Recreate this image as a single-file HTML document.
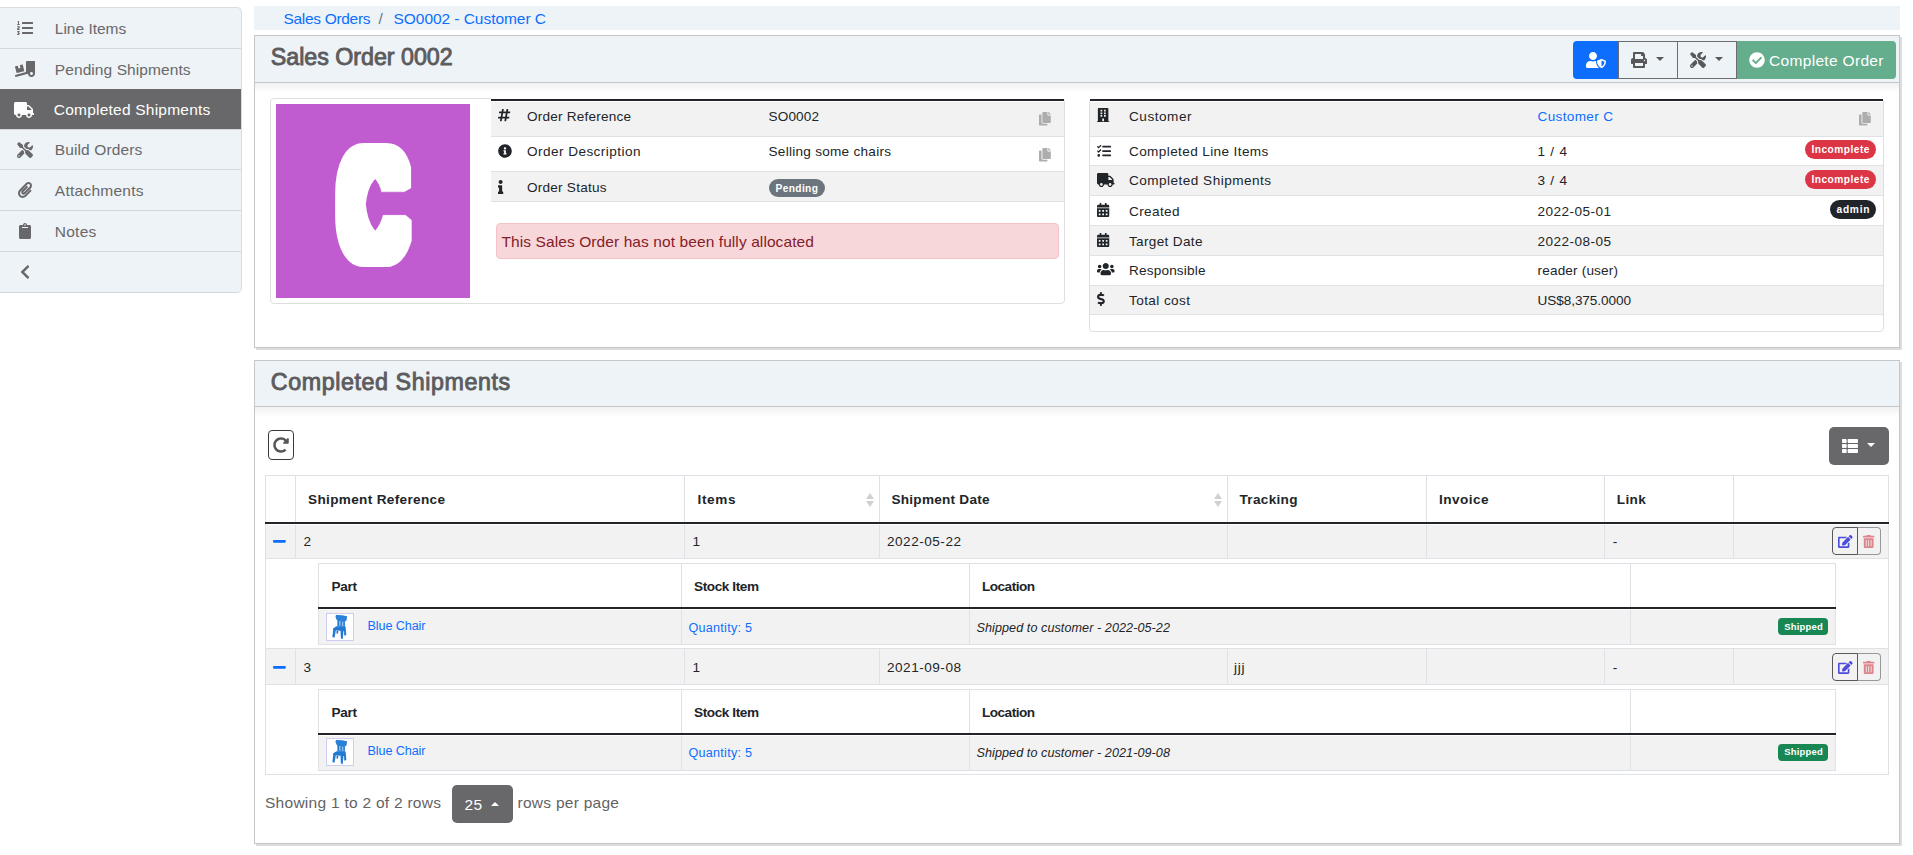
<!DOCTYPE html>
<html lang="en"><head><meta charset="utf-8"><title>Sales Order 0002</title>
<style>
*{box-sizing:border-box}
html,body{margin:0;padding:0}
body{width:1913px;height:855px;overflow:hidden;background:#fff;color:#212529;font-family:"Liberation Sans",sans-serif;font-size:16px;line-height:24px;position:relative}
a{color:#0d6efd;text-decoration:none}
svg.i{display:block;overflow:visible}
div,span,a{margin:0;padding:0}
.panel{position:absolute;border:1px solid #c6c6c6;background:#fff;box-shadow:2px 2px #ddd}
.hd{position:absolute;background:#eef3f7;border-bottom:1px solid #c6c6c6}
.hsh{position:absolute;background:linear-gradient(rgba(0,0,0,.055),rgba(0,0,0,0))}
.card{position:absolute;border:1px solid #dfdfdf;border-radius:4px;background:#fff}
.badge{position:absolute;color:#fff;border-radius:10px}
</style></head><body>
<nav id="sidebar">
<div style="position:absolute;left:-1px;top:7px;width:243px;height:286px;border:1px solid #d9dde1;border-bottom-color:#cfd5da;border-radius:0 5px 5px 0;background:#eef3f7"></div>
<div style="position:absolute;left:0px;top:48px;width:241px;height:1px;background:#d3d7db"></div>
<div style="position:absolute;left:0px;top:89px;width:241px;height:1px;background:#d3d7db"></div>
<div style="position:absolute;left:0px;top:129px;width:241px;height:1px;background:#d3d7db"></div>
<div style="position:absolute;left:0px;top:169px;width:241px;height:1px;background:#d3d7db"></div>
<div style="position:absolute;left:0px;top:210px;width:241px;height:1px;background:#d3d7db"></div>
<div style="position:absolute;left:0px;top:251px;width:241px;height:1px;background:#d3d7db"></div>
<div style="position:absolute;left:0px;top:89px;width:241px;height:40px;background:#68686a"></div>
<svg class="i" style="position:absolute;left:16.6px;top:20px;width:16.00px;height:16px;" viewBox="0 0 512 512"><path fill="#68686a" d="M61.770 401l17.500-20.150a19.920 19.920 0 0 0 5.070-14.190v-3.310C84.340 356 80.500 352 73 352H16a8 8 0 0 0-8 8v16a8 8 0 0 0 8 8h22.830a157.410 157.410 0 0 0-11 12.310l-5.610 7c-4 5.070-5.250 10.130-2.800 14.880l1.050 1.930c3 5.760 6.290 7.880 12.250 7.880h4.730c10.330 0 15.940 2.440 15.940 9.090 0 4.720-4.200 8.220-14.360 8.220a41.540 41.540 0 0 1-15.470-3.120c-6.490-3.880-11.740-3.500-15.600 3.120l-5.590 9.310c-3.720 6.130-3.190 11.720 2.630 15.940 7.710 4.690 20.380 9.440 37 9.440 34.160 0 48.500-22.750 48.500-44.120-.030-14.380-9.150-29.880-28.730-34.880zM496 224H176a16 16 0 0 0-16 16v32a16 16 0 0 0 16 16h320a16 16 0 0 0 16-16v-32a16 16 0 0 0-16-16zm0-160H176a16 16 0 0 0-16 16v32a16 16 0 0 0 16 16h320a16 16 0 0 0 16-16V80a16 16 0 0 0-16-16zm0 320H176a16 16 0 0 0-16 16v32a16 16 0 0 0 16 16h320a16 16 0 0 0 16-16v-32a16 16 0 0 0-16-16zM16 160h64a8 8 0 0 0 8-8v-16a8 8 0 0 0-8-8H64V40a8 8 0 0 0-8-8H32a8 8 0 0 0-7.140 4.420l-8 16A8 8 0 0 0 24 64h8v64H16a8 8 0 0 0-8 8v16a8 8 0 0 0 8 8zm-3.910 160H80a8 8 0 0 0 8-8v-16a8 8 0 0 0-8-8H41.320c3.290-10.290 48.340-18.680 48.340-56.440 0-29.060-25-39.560-44.470-39.560-21.360 0-33.800 10-40.460 18.750-4.370 5.590-3 10.840 2.800 15.370l8.580 6.880c5.610 4.560 11 2.470 16.120-2.440a13.440 13.440 0 0 1 9.460-3.840c3.330 0 9.280 1.560 9.280 8.750C51 248.190 0 257.310 0 304.590v4C0 316 5.080 320 12.090 320z"/></svg>
<span style="position:absolute;top:20px;font-size:15.52px;line-height:17px;white-space:nowrap;left:54.8px;letter-spacing:-0.011px;color:#68686a;">Line Items</span>
<svg class="i" style="position:absolute;left:14.6px;top:61px;width:20.00px;height:16px;" viewBox="0 0 640 512"><path fill="#68686a" d="M50.200 375.600c2.300 8.500 11.100 13.600 19.600 11.300l216.400-58c8.500-2.300 13.600-11.100 11.300-19.600l-49.700-185.500c-2.300-8.500-11.100-13.600-19.600-11.300L151 133.300l24.800 92.700-61.800 16.500-24.800-92.700-77.300 20.700C3.400 172.800-1.700 181.600.6 190.100l49.600 185.500zM384 0c-17.700 0-32 14.300-32 32v323.600L5.900 450c-4.300 1.200-6.800 5.600-5.600 9.800l12.600 46.300c1.200 4.300 5.600 6.800 9.800 5.600l393.700-107.400C418.800 464.100 467.600 512 528 512c61.900 0 112-50.100 112-112V0H384zm144 448c-26.500 0-48-21.500-48-48s21.500-48 48-48 48 21.500 48 48-21.500 48-48 48z"/></svg>
<span style="position:absolute;top:61px;font-size:15.52px;line-height:17px;white-space:nowrap;left:54.8px;letter-spacing:0.076px;color:#68686a;">Pending Shipments</span>
<svg class="i" style="position:absolute;left:14.0px;top:102px;width:20.00px;height:16px;" viewBox="0 0 640 512"><path fill="#fff" d="M624 352h-16V243.900c0-12.700-5.100-24.900-14.100-33.900L494 110.100c-9-9-21.200-14.100-33.900-14.100H416V48c0-26.500-21.500-48-48-48H48C21.500 0 0 21.500 0 48v320c0 26.500 21.500 48 48 48h16c0 53 43 96 96 96s96-43 96-96h128c0 53 43 96 96 96s96-43 96-96h48c8.800 0 16-7.200 16-16v-32c0-8.800-7.200-16-16-16zM160 464c-26.500 0-48-21.500-48-48s21.500-48 48-48 48 21.500 48 48-21.500 48-48 48zm320 0c-26.500 0-48-21.500-48-48s21.500-48 48-48 48 21.500 48 48-21.500 48-48 48zm80-208H416V144h44.100l99.900 99.900V256z"/></svg>
<span style="position:absolute;top:101px;font-size:15.52px;line-height:17px;white-space:nowrap;left:53.8px;letter-spacing:0.212px;color:#fff;">Completed Shipments</span>
<svg class="i" style="position:absolute;left:16.6px;top:142px;width:16.00px;height:16px;" viewBox="0 0 512 512"><path fill="#68686a" d="M501.1 395.7L384 278.6c-23.1-23.1-57.6-27.6-85.4-13.900L192 158.100V96L64 0 0 64l96 128h62.100l106.600 106.600c-13.600 27.800-9.200 62.300 13.900 85.400l117.100 117.100c14.600 14.600 38.200 14.600 52.700 0l52.700-52.700c14.500-14.600 14.500-38.200 0-52.700zM331.700 225c28.300 0 54.900 11 74.900 31l19.400 19.400c15.800-6.900 30.800-16.500 43.800-29.500 37.100-37.100 49.700-89.300 37.900-136.700-2.200-9-13.500-12.100-20.100-5.500l-74.400 74.400-67.900-11.300L334 98.900l74.400-74.400c6.600-6.600 3.400-17.900-5.700-20.200-47.400-11.700-99.600.9-136.600 37.900-28.500 28.500-41.900 66.100-41.200 103.600l82.100 82.100c8.100-1.900 16.500-2.900 24.700-2.900zm-103.900 82l-56.700-56.700L18.700 402.800c-25 25-25 65.500 0 90.500s65.500 25 90.500 0l123.600-123.600c-7.600-19.900-9.900-41.600-5-62.700zM64 472c-13.200 0-24-10.800-24-24 0-13.300 10.700-24 24-24s24 10.700 24 24c0 13.200-10.700 24-24 24z"/></svg>
<span style="position:absolute;top:141px;font-size:15.52px;line-height:17px;white-space:nowrap;left:54.8px;letter-spacing:0.114px;color:#68686a;">Build Orders</span>
<svg class="i" style="position:absolute;left:17.6px;top:182px;width:14.00px;height:16px;" viewBox="0 0 448 512"><path fill="#68686a" d="M43.246 466.142c-58.430-60.289-57.341-157.511 1.386-217.581L254.392 34c44.316-45.332 116.351-45.336 160.671 0 43.890 44.894 43.943 117.329 0 162.276L232.214 383.128c-29.855 30.537-78.633 30.111-107.982-.998-28.275-29.970-27.368-77.473 1.452-106.953l143.743-146.835c6.182-6.314 16.312-6.422 22.626-.241l22.861 22.379c6.315 6.182 6.422 16.312.241 22.626L171.427 319.927c-4.932 5.045-5.236 13.428-.648 18.292 4.372 4.634 11.245 4.711 15.688.165l182.849-186.851c19.613-20.062 19.613-52.725-.011-72.798-19.189-19.627-49.957-19.637-69.154 0L90.390 293.295c-34.763 35.560-35.299 93.120-1.191 128.313 34.010 35.093 88.985 35.137 123.058.286l172.060-175.999c6.177-6.319 16.307-6.433 22.626-.256l22.877 22.364c6.319 6.177 6.434 16.307.256 22.626l-172.060 175.998c-59.576 60.938-155.943 60.216-214.770-.485z"/></svg>
<span style="position:absolute;top:182px;font-size:15.52px;line-height:17px;white-space:nowrap;left:54.8px;letter-spacing:0.254px;color:#68686a;">Attachments</span>
<svg class="i" style="position:absolute;left:18.6px;top:223px;width:12.00px;height:16px;" viewBox="0 0 384 512"><path fill="#68686a" d="M384 112v352c0 26.510-21.490 48-48 48H48c-26.510 0-48-21.490-48-48V112c0-26.510 21.490-48 48-48h80c0-35.290 28.710-64 64-64s64 28.710 64 64h80c26.510 0 48 21.490 48 48zM192 40c-13.255 0-24 10.745-24 24s10.745 24 24 24 24-10.745 24-24-10.745-24-24-24m96 114v-20a6 6 0 0 0-6-6H102a6 6 0 0 0-6 6v20a6 6 0 0 0 6 6h180a6 6 0 0 0 6-6z"/></svg>
<span style="position:absolute;top:223px;font-size:15.52px;line-height:17px;white-space:nowrap;left:54.8px;letter-spacing:0.240px;color:#68686a;">Notes</span>
<svg class="i" style="position:absolute;left:19.6px;top:264px;width:10.00px;height:16px;" viewBox="0 0 320 512"><path fill="#68686a" d="M34.520 239.030L228.870 44.690c9.370-9.370 24.570-9.370 33.940 0l22.670 22.670c9.360 9.360 9.370 24.520.040 33.900L131.490 256l154.020 154.750c9.340 9.380 9.320 24.540-.040 33.900l-22.670 22.670c-9.370 9.370-24.570 9.370-33.940 0L34.520 272.970c-9.370-9.370-9.370-24.570 0-33.940z"/></svg>
</nav>
<header id="page-header">
<div style="position:absolute;left:254px;top:6px;width:1646px;height:24px;background:#eef3f7"></div>
<a style="position:absolute;top:10px;font-size:15.52px;line-height:17px;white-space:nowrap;left:283.5px;letter-spacing:-0.324px;color:#0d6efd;">Sales Orders</a>
<span style="position:absolute;top:10px;font-size:15.52px;line-height:17px;white-space:nowrap;left:378.5px;color:#6c757d;">/</span>
<a style="position:absolute;top:10px;font-size:15.52px;line-height:17px;white-space:nowrap;left:393.5px;letter-spacing:-0.057px;color:#0d6efd;">SO0002 - Customer C</a>
<div class="panel" style="left:254px;top:35px;width:1646px;height:313px"></div>
<div class="hd" style="left:255px;top:36px;width:1644px;height:47px"></div>
<div class="hsh" style="left:255px;top:83px;width:1644px;height:10px"></div>
<span style="position:absolute;top:43.5px;font-size:23.28px;line-height:26px;white-space:nowrap;left:270.8px;letter-spacing:-0.031px;color:#5c5c5e;-webkit-text-stroke:.9px #5c5c5e;">Sales Order 0002</span>
<div class="panel" style="left:254px;top:360px;width:1646px;height:484px"></div>
<div class="hd" style="left:255px;top:361px;width:1644px;height:46px"></div>
<div class="hsh" style="left:255px;top:407px;width:1644px;height:10px"></div>
<span style="position:absolute;top:369px;font-size:23.28px;line-height:26px;white-space:nowrap;left:270.8px;letter-spacing:0.581px;color:#5c5c5e;-webkit-text-stroke:.9px #5c5c5e;">Completed Shipments</span>
</header>
<section id="order-details">
<div style="position:absolute;left:1573px;top:41px;width:46px;height:38px;background:#0d6efd;border-radius:4px 0 0 4px"></div>
<svg class="i" style="position:absolute;left:1586px;top:52px;width:20.00px;height:16px;" viewBox="0 0 640 512"><path fill="#fff" d="M622.300 271.100l-115.200-45c-4.100-1.600-12.600-3.700-22.200 0l-115.200 45c-10.700 4.200-17.700 14-17.700 24.900 0 111.600 68.700 188.800 132.900 213.900 9.600 3.700 18 1.600 22.200 0C558.400 489.900 640 420.500 640 296c0-10.900-7-20.700-17.700-24.900zM496 462.400V273.300l95.500 37.300c-5.600 87.100-60.900 135.400-95.500 151.800zM224 256c70.700 0 128-57.300 128-128S294.700 0 224 0 96 57.300 96 128s57.300 128 128 128zm96 40c0-2.500.8-4.800 1.100-7.200-2.500-.1-4.900-.8-7.500-.8h-16.700c-22.200 10.200-46.900 16-72.900 16s-50.600-5.800-72.900-16h-16.700C60.200 288 0 348.200 0 422.400V464c0 26.500 21.500 48 48 48h352c6.800 0 13.300-1.500 19.200-4-54-42.900-99.200-116.700-99.200-212z"/></svg>
<div style="position:absolute;left:1618px;top:41px;width:60px;height:38px;border:1px solid #6c6c6e"></div>
<svg class="i" style="position:absolute;left:1631px;top:52px;width:16.00px;height:16px;" viewBox="0 0 512 512"><path fill="#58585a" d="M448 192V77.250c0-8.490-3.370-16.620-9.370-22.630L393.370 9.370c-6-6-14.140-9.370-22.630-9.370H96C78.330 0 64 14.330 64 32v160c-35.350 0-64 28.650-64 64v112c0 8.840 7.160 16 16 16h48v96c0 17.670 14.330 32 32 32h320c17.670 0 32-14.330 32-32v-96h48c8.840 0 16-7.160 16-16V256c0-35.350-28.650-64-64-64zm-64 256H128v-96h256v96zm0-224H128V64h192v48c0 8.840 7.160 16 16 16h48v96zm48 72c-13.250 0-24-10.750-24-24 0-13.260 10.750-24 24-24s24 10.740 24 24c0 13.250-10.750 24-24 24z"/></svg>
<div style="position:absolute;left:1655.5px;top:57px;width:0px;height:0px;border-left:4.8px solid transparent;border-right:4.8px solid transparent;border-top:4.8px solid #58585a"></div>
<div style="position:absolute;left:1677px;top:41px;width:60px;height:38px;border:1px solid #6c6c6e"></div>
<svg class="i" style="position:absolute;left:1690px;top:52px;width:16.00px;height:16px;" viewBox="0 0 512 512"><path fill="#58585a" d="M501.1 395.7L384 278.6c-23.1-23.1-57.6-27.6-85.4-13.900L192 158.100V96L64 0 0 64l96 128h62.100l106.600 106.600c-13.600 27.800-9.200 62.300 13.900 85.400l117.100 117.100c14.600 14.600 38.200 14.600 52.700 0l52.700-52.700c14.500-14.600 14.500-38.200 0-52.700zM331.700 225c28.300 0 54.900 11 74.900 31l19.400 19.400c15.800-6.900 30.800-16.500 43.800-29.500 37.100-37.100 49.700-89.300 37.900-136.700-2.200-9-13.500-12.100-20.100-5.500l-74.400 74.400-67.900-11.300L334 98.900l74.400-74.400c6.600-6.600 3.400-17.900-5.700-20.200-47.400-11.700-99.600.9-136.600 37.900-28.500 28.500-41.900 66.100-41.200 103.600l82.100 82.100c8.100-1.900 16.500-2.900 24.700-2.900zm-103.900 82l-56.700-56.700L18.700 402.800c-25 25-25 65.500 0 90.500s65.500 25 90.500 0l123.600-123.600c-7.600-19.900-9.900-41.600-5-62.700zM64 472c-13.200 0-24-10.800-24-24 0-13.300 10.700-24 24-24s24 10.700 24 24c0 13.200-10.700 24-24 24z"/></svg>
<div style="position:absolute;left:1714.5px;top:57px;width:0px;height:0px;border-left:4.8px solid transparent;border-right:4.8px solid transparent;border-top:4.8px solid #58585a"></div>
<div style="position:absolute;left:1737px;top:41px;width:159px;height:38px;background:#64ad8d;border-radius:0 4px 4px 0"></div>
<svg class="i" style="position:absolute;left:1749px;top:52px;width:16.00px;height:16px;" viewBox="0 0 512 512"><path fill="#fff" d="M504 256c0 136.967-111.033 248-248 248S8 392.967 8 256 119.033 8 256 8s248 111.033 248 248zM227.314 387.314l184-184c6.248-6.248 6.248-16.379 0-22.627l-22.627-22.627c-6.248-6.249-16.379-6.249-22.628 0L216 308.118l-70.059-70.059c-6.248-6.248-16.379-6.248-22.628 0l-22.627 22.627c-6.248 6.248-6.248 16.379 0 22.627l104 104c6.249 6.249 16.379 6.249 22.628.001z"/></svg>
<span style="position:absolute;top:52px;font-size:15.52px;line-height:17px;white-space:nowrap;left:1769px;letter-spacing:0.315px;color:#fff;">Complete Order</span>
<div class="card" style="left:270px;top:98px;width:795px;height:206px"></div>
<div style="position:absolute;left:276px;top:104px;width:194px;height:194px;background:#c15cd0"></div>
<svg style="position:absolute;left:276px;top:104px;width:194px;height:194px;overflow:hidden" viewBox="0 0 194 194"><defs><filter id="cm" x="-50%" y="-50%" width="200%" height="200%"><feMorphology operator="dilate" radius="11.18 9.5"/></filter></defs><g filter="url(#cm)"><g transform="translate(97 152) scale(.863 1.462)"><text x="0" y="0" text-anchor="middle" font-family="Liberation Sans, sans-serif" font-size="100" fill="#fff">C</text></g></g></svg>
<div style="position:absolute;left:491px;top:98px;width:573px;height:1px;background:#fff"></div>
<div style="position:absolute;left:491px;top:99px;width:573px;height:2px;background:#212529"></div>
<div style="position:absolute;left:491px;top:102px;width:573px;height:34px;background:#f2f2f2"></div>
<div style="position:absolute;left:491px;top:136px;width:573px;height:1px;background:#dee2e6"></div>
<div style="position:absolute;left:491px;top:171px;width:573px;height:1px;background:#dee2e6"></div>
<div style="position:absolute;left:491px;top:172px;width:573px;height:29px;background:#f2f2f2"></div>
<div style="position:absolute;left:491px;top:201px;width:573px;height:1px;background:#dee2e6"></div>
<svg class="i" style="position:absolute;left:497.6px;top:108px;width:12.25px;height:14px;" viewBox="0 0 448 512"><path fill="#212529" d="M440.667 182.109l7.143-40c1.313-7.355-4.342-14.109-11.813-14.109h-74.810l14.623-81.891C377.123 38.754 371.468 32 363.997 32h-40.632a12 12 0 0 0-11.813 9.891L296.175 128H197.540l14.623-81.891C213.477 38.754 207.822 32 200.350 32h-40.632a12 12 0 0 0-11.813 9.891L132.528 128H53.432a12 12 0 0 0-11.813 9.891l-7.143 40C33.163 185.246 38.818 192 46.289 192h74.810L98.242 320H19.146a12 12 0 0 0-11.813 9.891l-7.143 40C-1.123 377.246 4.532 384 12.003 384h74.810L72.190 465.891C70.877 473.246 76.532 480 84.003 480h40.632a12 12 0 0 0 11.813-9.891L151.826 384h98.634l-14.623 81.891C234.523 473.246 240.178 480 247.650 480h40.632a12 12 0 0 0 11.813-9.891L315.472 384h79.096a12 12 0 0 0 11.813-9.891l7.143-40c1.313-7.355-4.342-14.109-11.813-14.109h-74.810l22.857-128h79.096a12 12 0 0 0 11.813-9.891zM261.889 320h-98.634l22.857-128h98.634l-22.857 128z"/></svg>
<svg class="i" style="position:absolute;left:497.6px;top:144px;width:14.00px;height:14px;" viewBox="0 0 512 512"><path fill="#212529" d="M256 8C119.043 8 8 119.083 8 256c0 136.997 111.043 248 248 248s248-111.003 248-248C504 119.083 392.957 8 256 8zm0 110c23.196 0 42 18.804 42 42s-18.804 42-42 42-42-18.804-42-42 18.804-42 42-42zm56 254c0 6.627-5.373 12-12 12h-88c-6.627 0-12-5.373-12-12v-24c0-6.627 5.373-12 12-12h12v-64h-12c-6.627 0-12-5.373-12-12v-24c0-6.627 5.373-12 12-12h64c6.627 0 12 5.373 12 12v100h12c6.627 0 12 5.373 12 12v24z"/></svg>
<svg class="i" style="position:absolute;left:497.8px;top:180px;width:5.25px;height:14px;" viewBox="0 0 192 512"><path fill="#212529" d="M20 424.229h20V279.771H20c-11.046 0-20-8.954-20-20V212c0-11.046 8.954-20 20-20h112c11.046 0 20 8.954 20 20v212.229h20c11.046 0 20 8.954 20 20V492c0 11.046-8.954 20-20 20H20c-11.046 0-20-8.954-20-20v-47.771c0-11.046 8.954-20 20-20zM96 0C56.235 0 24 32.235 24 72s32.235 72 72 72 72-32.235 72-72S135.764 0 96 0z"/></svg>
<span style="position:absolute;top:109px;font-size:13.58px;line-height:15px;white-space:nowrap;left:527px;letter-spacing:0.206px;">Order Reference</span>
<span style="position:absolute;top:144px;font-size:13.58px;line-height:15px;white-space:nowrap;left:527px;letter-spacing:0.444px;">Order Description</span>
<span style="position:absolute;top:180px;font-size:13.58px;line-height:15px;white-space:nowrap;left:527px;letter-spacing:0.230px;">Order Status</span>
<span style="position:absolute;top:109px;font-size:13.58px;line-height:15px;white-space:nowrap;left:768.5px;letter-spacing:0.136px;">SO0002</span>
<span style="position:absolute;top:144px;font-size:13.58px;line-height:15px;white-space:nowrap;left:768.5px;letter-spacing:0.265px;">Selling some chairs</span>
<div style="position:absolute;left:769px;top:179px;width:56px;height:18px;background:#6c757d;border-radius:9px"></div>
<span style="position:absolute;top:183px;font-size:10.19px;line-height:11px;white-space:nowrap;left:775.5px;letter-spacing:0.385px;font-weight:bold;color:#fff;">Pending</span>
<svg class="i" style="position:absolute;left:1039px;top:111.5px;width:11.81px;height:13.5px;" viewBox="0 0 448 512"><path fill="#adadad" d="M320 448v40c0 13.255-10.745 24-24 24H24c-13.255 0-24-10.745-24-24V120c0-13.255 10.745-24 24-24h72v296c0 30.879 25.121 56 56 56h168zm0-344V0H152c-13.255 0-24 10.745-24 24v368c0 13.255 10.745 24 24 24h272c13.255 0 24-10.745 24-24V128H344c-13.200 0-24-10.800-24-24zm120.971-31.029L375.029 7.029A24 24 0 0 0 358.059 0H352v96h96v-6.059a24 24 0 0 0-7.029-16.970z"/></svg>
<svg class="i" style="position:absolute;left:1039px;top:147.5px;width:11.81px;height:13.5px;" viewBox="0 0 448 512"><path fill="#adadad" d="M320 448v40c0 13.255-10.745 24-24 24H24c-13.255 0-24-10.745-24-24V120c0-13.255 10.745-24 24-24h72v296c0 30.879 25.121 56 56 56h168zm0-344V0H152c-13.255 0-24 10.745-24 24v368c0 13.255 10.745 24 24 24h272c13.255 0 24-10.745 24-24V128H344c-13.200 0-24-10.800-24-24zm120.971-31.029L375.029 7.029A24 24 0 0 0 358.059 0H352v96h96v-6.059a24 24 0 0 0-7.029-16.970z"/></svg>
<div style="position:absolute;left:496px;top:223px;width:563px;height:36px;background:#f8d7da;border:1px solid #f5c2c7;border-radius:4px"></div>
<span style="position:absolute;top:233px;font-size:15.52px;line-height:17px;white-space:nowrap;left:501.5px;letter-spacing:0.083px;color:#842029;">This Sales Order has not been fully allocated</span>
<div class="card" style="left:1089px;top:98px;width:795px;height:234px"></div>
<div style="position:absolute;left:1090px;top:98px;width:793px;height:1px;background:#fff"></div>
<div style="position:absolute;left:1090px;top:99px;width:793px;height:2px;background:#212529"></div>
<div style="position:absolute;left:1090px;top:102px;width:793px;height:34px;background:#f2f2f2"></div>
<div style="position:absolute;left:1090px;top:136px;width:793px;height:1px;background:#dee2e6"></div>
<div style="position:absolute;left:1090px;top:165px;width:793px;height:1px;background:#dee2e6"></div>
<div style="position:absolute;left:1090px;top:166px;width:793px;height:29px;background:#f2f2f2"></div>
<div style="position:absolute;left:1090px;top:195px;width:793px;height:1px;background:#dee2e6"></div>
<div style="position:absolute;left:1090px;top:225px;width:793px;height:1px;background:#dee2e6"></div>
<div style="position:absolute;left:1090px;top:226px;width:793px;height:29px;background:#f2f2f2"></div>
<div style="position:absolute;left:1090px;top:255px;width:793px;height:1px;background:#dee2e6"></div>
<div style="position:absolute;left:1090px;top:285px;width:793px;height:1px;background:#dee2e6"></div>
<div style="position:absolute;left:1090px;top:286px;width:793px;height:28px;background:#f2f2f2"></div>
<div style="position:absolute;left:1090px;top:314px;width:793px;height:1px;background:#dee2e6"></div>
<svg class="i" style="position:absolute;left:1097.3px;top:108px;width:12.25px;height:14px;" viewBox="0 0 448 512"><path fill="#212529" d="M436 480h-20V24c0-13.255-10.745-24-24-24H56C42.745 0 32 10.745 32 24v456H12c-6.627 0-12 5.373-12 12v20h448v-20c0-6.627-5.373-12-12-12zM128 76c0-6.627 5.373-12 12-12h40c6.627 0 12 5.373 12 12v40c0 6.627-5.373 12-12 12h-40c-6.627 0-12-5.373-12-12V76zm0 96c0-6.627 5.373-12 12-12h40c6.627 0 12 5.373 12 12v40c0 6.627-5.373 12-12 12h-40c-6.627 0-12-5.373-12-12v-40zm52 148h-40c-6.627 0-12-5.373-12-12v-40c0-6.627 5.373-12 12-12h40c6.627 0 12 5.373 12 12v40c0 6.627-5.373 12-12 12zm76 160h-64v-84c0-6.627 5.373-12 12-12h40c6.627 0 12 5.373 12 12v84zm64-172c0 6.627-5.373 12-12 12h-40c-6.627 0-12-5.373-12-12v-40c0-6.627 5.373-12 12-12h40c6.627 0 12 5.373 12 12v40zm0-96c0 6.627-5.373 12-12 12h-40c-6.627 0-12-5.373-12-12v-40c0-6.627 5.373-12 12-12h40c6.627 0 12 5.373 12 12v40zm0-96c0 6.627-5.373 12-12 12h-40c-6.627 0-12-5.373-12-12V76c0-6.627 5.373-12 12-12h40c6.627 0 12 5.373 12 12v40z"/></svg>
<span style="position:absolute;top:109px;font-size:13.58px;line-height:15px;white-space:nowrap;left:1129px;letter-spacing:0.521px;">Customer</span>
<a style="position:absolute;top:109px;font-size:13.58px;line-height:15px;white-space:nowrap;left:1537.5px;letter-spacing:0.341px;color:#0d6efd;">Customer C</a>
<svg class="i" style="position:absolute;left:1097.3px;top:144px;width:14.00px;height:14px;" viewBox="0 0 512 512"><path fill="#212529" d="M139.610 35.500a12 12 0 0 0-17 0L58.930 98.810l-22.700-22.120a12 12 0 0 0-17 0L3.530 92.410a12 12 0 0 0 0 17l47.590 47.400a12.780 12.780 0 0 0 17.610 0l15.590-15.620L156.520 69a12.090 12.090 0 0 0 .090-17zm0 159.190a12 12 0 0 0-17 0l-63.680 63.720-22.700-22.100a12 12 0 0 0-17 0L3.530 252a12 12 0 0 0 0 17L51 316.500a12.770 12.770 0 0 0 17.600 0l15.700-15.690 72.200-72.220a12 12 0 0 0 .090-16.900zM64 368c-26.490 0-48.590 21.500-48.590 48S37.530 464 64 464a48 48 0 0 0 0-96zm432 16H208a16 16 0 0 0-16 16v32a16 16 0 0 0 16 16h288a16 16 0 0 0 16-16v-32a16 16 0 0 0-16-16zm0-320H208a16 16 0 0 0-16 16v32a16 16 0 0 0 16 16h288a16 16 0 0 0 16-16V80a16 16 0 0 0-16-16zm0 160H208a16 16 0 0 0-16 16v32a16 16 0 0 0 16 16h288a16 16 0 0 0 16-16v-32a16 16 0 0 0-16-16z"/></svg>
<span style="position:absolute;top:144px;font-size:13.58px;line-height:15px;white-space:nowrap;left:1129px;letter-spacing:0.381px;">Completed Line Items</span>
<span style="position:absolute;top:144px;font-size:13.58px;line-height:15px;white-space:nowrap;left:1537.5px;letter-spacing:0.771px;">1 / 4</span>
<svg class="i" style="position:absolute;left:1097.3px;top:173px;width:17.50px;height:14px;" viewBox="0 0 640 512"><path fill="#212529" d="M624 352h-16V243.900c0-12.700-5.100-24.900-14.100-33.900L494 110.100c-9-9-21.200-14.100-33.900-14.100H416V48c0-26.500-21.500-48-48-48H48C21.500 0 0 21.500 0 48v320c0 26.500 21.500 48 48 48h16c0 53 43 96 96 96s96-43 96-96h128c0 53 43 96 96 96s96-43 96-96h48c8.800 0 16-7.200 16-16v-32c0-8.800-7.200-16-16-16zM160 464c-26.500 0-48-21.500-48-48s21.500-48 48-48 48 21.500 48 48-21.500 48-48 48zm320 0c-26.500 0-48-21.500-48-48s21.500-48 48-48 48 21.500 48 48-21.500 48-48 48zm80-208H416V144h44.100l99.900 99.900V256z"/></svg>
<span style="position:absolute;top:173px;font-size:13.58px;line-height:15px;white-space:nowrap;left:1129px;letter-spacing:0.468px;">Completed Shipments</span>
<span style="position:absolute;top:173px;font-size:13.58px;line-height:15px;white-space:nowrap;left:1537.5px;letter-spacing:0.771px;">3 / 4</span>
<svg class="i" style="position:absolute;left:1097.3px;top:203px;width:12.25px;height:14px;" viewBox="0 0 448 512"><path fill="#212529" d="M0 464c0 26.500 21.500 48 48 48h352c26.500 0 48-21.500 48-48V192H0v272zm320-196c0-6.600 5.400-12 12-12h40c6.600 0 12 5.400 12 12v40c0 6.600-5.400 12-12 12h-40c-6.600 0-12-5.400-12-12v-40zm0 128c0-6.600 5.400-12 12-12h40c6.600 0 12 5.400 12 12v40c0 6.600-5.400 12-12 12h-40c-6.600 0-12-5.400-12-12v-40zM192 268c0-6.600 5.400-12 12-12h40c6.600 0 12 5.400 12 12v40c0 6.600-5.400 12-12 12h-40c-6.600 0-12-5.400-12-12v-40zm0 128c0-6.600 5.400-12 12-12h40c6.600 0 12 5.400 12 12v40c0 6.600-5.400 12-12 12h-40c-6.600 0-12-5.400-12-12v-40zM64 268c0-6.600 5.400-12 12-12h40c6.600 0 12 5.400 12 12v40c0 6.600-5.400 12-12 12H76c-6.600 0-12-5.400-12-12v-40zm0 128c0-6.600 5.400-12 12-12h40c6.600 0 12 5.400 12 12v40c0 6.600-5.400 12-12 12H76c-6.600 0-12-5.400-12-12v-40zM400 64h-48V16c0-8.800-7.200-16-16-16h-32c-8.800 0-16 7.200-16 16v48H160V16c0-8.800-7.200-16-16-16h-32c-8.800 0-16 7.200-16 16v48H48C21.500 64 0 85.500 0 112v48h448v-48c0-26.500-21.500-48-48-48z"/></svg>
<span style="position:absolute;top:204px;font-size:13.58px;line-height:15px;white-space:nowrap;left:1129px;letter-spacing:0.366px;">Created</span>
<span style="position:absolute;top:204px;font-size:13.58px;line-height:15px;white-space:nowrap;left:1537.5px;letter-spacing:0.450px;">2022-05-01</span>
<svg class="i" style="position:absolute;left:1097.3px;top:233px;width:12.25px;height:14px;" viewBox="0 0 448 512"><path fill="#212529" d="M0 464c0 26.500 21.500 48 48 48h352c26.500 0 48-21.500 48-48V192H0v272zm320-196c0-6.600 5.400-12 12-12h40c6.600 0 12 5.400 12 12v40c0 6.600-5.400 12-12 12h-40c-6.600 0-12-5.400-12-12v-40zm0 128c0-6.600 5.400-12 12-12h40c6.600 0 12 5.400 12 12v40c0 6.600-5.400 12-12 12h-40c-6.600 0-12-5.400-12-12v-40zM192 268c0-6.600 5.400-12 12-12h40c6.600 0 12 5.400 12 12v40c0 6.600-5.400 12-12 12h-40c-6.600 0-12-5.400-12-12v-40zm0 128c0-6.600 5.400-12 12-12h40c6.600 0 12 5.400 12 12v40c0 6.600-5.400 12-12 12h-40c-6.600 0-12-5.400-12-12v-40zM64 268c0-6.600 5.400-12 12-12h40c6.600 0 12 5.400 12 12v40c0 6.600-5.400 12-12 12H76c-6.600 0-12-5.400-12-12v-40zm0 128c0-6.600 5.400-12 12-12h40c6.600 0 12 5.400 12 12v40c0 6.600-5.400 12-12 12H76c-6.600 0-12-5.400-12-12v-40zM400 64h-48V16c0-8.800-7.200-16-16-16h-32c-8.800 0-16 7.200-16 16v48H160V16c0-8.800-7.200-16-16-16h-32c-8.800 0-16 7.200-16 16v48H48C21.500 64 0 85.500 0 112v48h448v-48c0-26.500-21.500-48-48-48z"/></svg>
<span style="position:absolute;top:234px;font-size:13.58px;line-height:15px;white-space:nowrap;left:1129px;letter-spacing:0.331px;">Target Date</span>
<span style="position:absolute;top:234px;font-size:13.58px;line-height:15px;white-space:nowrap;left:1537.5px;letter-spacing:0.450px;">2022-08-05</span>
<svg class="i" style="position:absolute;left:1097.3px;top:262px;width:17.50px;height:14px;" viewBox="0 0 640 512"><path fill="#212529" d="M96 224c35.300 0 64-28.700 64-64s-28.700-64-64-64-64 28.700-64 64 28.700 64 64 64zm448 0c35.300 0 64-28.700 64-64s-28.700-64-64-64-64 28.700-64 64 28.700 64 64 64zm32 32h-64c-17.600 0-33.500 7.100-45.100 18.600 40.300 22.100 68.900 62 75.100 109.400h66c17.700 0 32-14.300 32-32v-32c0-35.300-28.700-64-64-64zm-256 0c61.900 0 112-50.100 112-112S381.900 32 320 32 208 82.100 208 144s50.100 112 112 112zm76.800 32h-8.300c-20.800 10-43.900 16-68.500 16s-47.600-6-68.500-16h-8.300C179.600 288 128 339.600 128 403.200V432c0 26.500 21.500 48 48 48h288c26.500 0 48-21.500 48-48v-28.800c0-63.600-51.600-115.200-115.200-115.200zm-223.700-13.400C161.500 263.100 145.600 256 128 256H64c-35.300 0-64 28.700-64 64v32c0 17.700 14.300 32 32 32h65.900c6.300-47.400 34.900-87.300 75.200-109.400z"/></svg>
<span style="position:absolute;top:263px;font-size:13.58px;line-height:15px;white-space:nowrap;left:1129px;letter-spacing:0.178px;">Responsible</span>
<span style="position:absolute;top:263px;font-size:13.58px;line-height:15px;white-space:nowrap;left:1537.5px;letter-spacing:0.169px;">reader (user)</span>
<svg class="i" style="position:absolute;left:1097.3px;top:292px;width:7.88px;height:14px;" viewBox="0 0 288 512"><path fill="#212529" d="M209.200 233.400l-108-31.600C88.700 198.200 80 186.500 80 173.500c0-16.300 13.200-29.500 29.500-29.500h66.300c12.200 0 24.200 3.700 34.200 10.500 6.100 4.100 14.300 3.100 19.500-2l34.800-34c7.100-6.900 6.100-18.400-1.800-24.500C238 74.800 207.400 64.100 176 64V16c0-8.800-7.200-16-16-16h-32c-8.800 0-16 7.200-16 16v48h-2.500C45.800 64-5.400 118.700.5 183.600c4.200 46.100 39.400 83.600 83.800 96.600l102.500 30c12.500 3.700 21.200 15.300 21.200 28.300 0 16.300-13.200 29.500-29.500 29.500h-66.300C100 368 88 364.300 78 357.500c-6.100-4.100-14.300-3.100-19.500 2l-34.800 34c-7.100 6.900-6.100 18.400 1.800 24.500 24.500 19.200 55.100 29.900 86.500 30v48c0 8.800 7.200 16 16 16h32c8.800 0 16-7.200 16-16v-48.200c46.600-.9 90.300-28.600 105.700-72.700 21.500-61.600-14.600-124.800-72.500-141.700z"/></svg>
<span style="position:absolute;top:293px;font-size:13.58px;line-height:15px;white-space:nowrap;left:1129px;letter-spacing:0.405px;">Total cost</span>
<span style="position:absolute;top:293px;font-size:13.58px;line-height:15px;white-space:nowrap;left:1537.5px;letter-spacing:-0.072px;">US$8,375.0000</span>
<svg class="i" style="position:absolute;left:1858.5px;top:111.5px;width:11.81px;height:13.5px;" viewBox="0 0 448 512"><path fill="#adadad" d="M320 448v40c0 13.255-10.745 24-24 24H24c-13.255 0-24-10.745-24-24V120c0-13.255 10.745-24 24-24h72v296c0 30.879 25.121 56 56 56h168zm0-344V0H152c-13.255 0-24 10.745-24 24v368c0 13.255 10.745 24 24 24h272c13.255 0 24-10.745 24-24V128H344c-13.200 0-24-10.800-24-24zm120.971-31.029L375.029 7.029A24 24 0 0 0 358.059 0H352v96h96v-6.059a24 24 0 0 0-7.029-16.970z"/></svg>
<div style="position:absolute;left:1805px;top:140px;width:71px;height:18.5px;background:#dc3545;border-radius:9.5px"></div>
<span style="position:absolute;top:144px;font-size:10.19px;line-height:11px;white-space:nowrap;left:1811.5px;letter-spacing:0.468px;font-weight:bold;color:#fff;">Incomplete</span>
<div style="position:absolute;left:1805px;top:170px;width:71px;height:18.5px;background:#dc3545;border-radius:9.5px"></div>
<span style="position:absolute;top:174px;font-size:10.19px;line-height:11px;white-space:nowrap;left:1811.5px;letter-spacing:0.468px;font-weight:bold;color:#fff;">Incomplete</span>
<div style="position:absolute;left:1830px;top:200px;width:46px;height:18.5px;background:#212529;border-radius:9.5px"></div>
<span style="position:absolute;top:204px;font-size:10.19px;line-height:11px;white-space:nowrap;left:1836.5px;letter-spacing:0.749px;font-weight:bold;color:#fff;">admin</span>
</section>
<section id="completed-shipments">
<div style="position:absolute;left:268px;top:430px;width:26px;height:30px;border:1px solid #3a3a3c;border-radius:4px;background:#fff"></div>
<svg class="i" style="position:absolute;left:273px;top:437px;width:16.00px;height:16px;" viewBox="0 0 512 512"><path fill="#555557" d="M256.455 8c66.269.119 126.437 26.233 170.859 68.685l35.715-35.715C478.149 25.851 504 36.559 504 57.941V192c0 13.255-10.745 24-24 24H345.941c-21.382 0-32.090-25.851-16.971-40.971l41.750-41.750c-30.864-28.899-70.801-44.907-113.230-45.273-92.398-.798-170.283 73.977-169.484 169.442C88.764 348.009 162.184 424 256 424c41.127 0 79.997-14.678 110.629-41.556 4.743-4.161 11.906-3.908 16.368.553l39.662 39.662c4.872 4.872 4.631 12.815-.482 17.433C378.202 479.813 319.926 504 256 504 119.034 504 8.001 392.967 8 256.002 7.999 119.193 119.646 7.755 256.455 8z"/></svg>
<div style="position:absolute;left:1829px;top:427px;width:60px;height:38px;background:#68686a;border-radius:5px"></div>
<svg class="i" style="position:absolute;left:1842px;top:438px;width:16.00px;height:16px;" viewBox="0 0 512 512"><path fill="#fff" d="M149.333 216v80c0 13.255-10.745 24-24 24H24c-13.255 0-24-10.745-24-24v-80c0-13.255 10.745-24 24-24h101.333c13.255 0 24 10.745 24 24zM0 376v80c0 13.255 10.745 24 24 24h101.333c13.255 0 24-10.745 24-24v-80c0-13.255-10.745-24-24-24H24c-13.255 0-24 10.745-24 24zM125.333 32H24C10.745 32 0 42.745 0 56v80c0 13.255 10.745 24 24 24h101.333c13.255 0 24-10.745 24-24V56c0-13.255-10.745-24-24-24zm80 448H488c13.255 0 24-10.745 24-24v-80c0-13.255-10.745-24-24-24H205.333c-13.255 0-24 10.745-24 24v80c0 13.255 10.745 24 24 24zm-24-424v80c0 13.255 10.745 24 24 24H488c13.255 0 24-10.745 24-24V56c0-13.255-10.745-24-24-24H205.333c-13.255 0-24 10.745-24 24zm24 264H488c13.255 0 24-10.745 24-24v-80c0-13.255-10.745-24-24-24H205.333c-13.255 0-24 10.745-24 24v80c0 13.255 10.745 24 24 24z"/></svg>
<div style="position:absolute;left:1866.5px;top:443px;width:0px;height:0px;border-left:4.6px solid transparent;border-right:4.6px solid transparent;border-top:4.8px solid #fff"></div>
<div style="position:absolute;left:265px;top:475px;width:1624px;height:300px;border:1px solid #dee2e6"></div>
<div style="position:absolute;left:295px;top:476px;width:1px;height:46px;background:#dee2e6"></div>
<div style="position:absolute;left:684px;top:476px;width:1px;height:46px;background:#dee2e6"></div>
<div style="position:absolute;left:879px;top:476px;width:1px;height:46px;background:#dee2e6"></div>
<div style="position:absolute;left:1227px;top:476px;width:1px;height:46px;background:#dee2e6"></div>
<div style="position:absolute;left:1426px;top:476px;width:1px;height:46px;background:#dee2e6"></div>
<div style="position:absolute;left:1604px;top:476px;width:1px;height:46px;background:#dee2e6"></div>
<div style="position:absolute;left:1733px;top:476px;width:1px;height:46px;background:#dee2e6"></div>
<div style="position:absolute;left:265px;top:522px;width:1624px;height:2px;background:#212529"></div>
<span style="position:absolute;top:492px;font-size:13.58px;line-height:15px;white-space:nowrap;left:308px;letter-spacing:0.336px;font-weight:bold;">Shipment Reference</span>
<span style="position:absolute;top:492px;font-size:13.58px;line-height:15px;white-space:nowrap;left:697.5px;letter-spacing:0.633px;font-weight:bold;">Items</span>
<span style="position:absolute;top:492px;font-size:13.58px;line-height:15px;white-space:nowrap;left:891.5px;letter-spacing:0.245px;font-weight:bold;">Shipment Date</span>
<span style="position:absolute;top:492px;font-size:13.58px;line-height:15px;white-space:nowrap;left:1239.5px;letter-spacing:0.308px;font-weight:bold;">Tracking</span>
<span style="position:absolute;top:492px;font-size:13.58px;line-height:15px;white-space:nowrap;left:1439px;letter-spacing:0.452px;font-weight:bold;">Invoice</span>
<span style="position:absolute;top:492px;font-size:13.58px;line-height:15px;white-space:nowrap;left:1616.8px;letter-spacing:0.363px;font-weight:bold;">Link</span>
<div style="position:absolute;left:865.5px;top:492.5px;width:0px;height:0px;border-left:4.2px solid transparent;border-right:4.2px solid transparent;border-bottom:6px solid #d0d0d0"></div><div style="position:absolute;left:865.5px;top:501px;width:0px;height:0px;border-left:4.2px solid transparent;border-right:4.2px solid transparent;border-top:6px solid #d0d0d0"></div>
<div style="position:absolute;left:1213.5px;top:492.5px;width:0px;height:0px;border-left:4.2px solid transparent;border-right:4.2px solid transparent;border-bottom:6px solid #d0d0d0"></div><div style="position:absolute;left:1213.5px;top:501px;width:0px;height:0px;border-left:4.2px solid transparent;border-right:4.2px solid transparent;border-top:6px solid #d0d0d0"></div>
<div style="position:absolute;left:266px;top:525px;width:1622px;height:33px;background:#f2f2f2"></div>
<div style="position:absolute;left:266px;top:558px;width:1622px;height:1px;background:#dee2e6"></div>
<div style="position:absolute;left:295px;top:525px;width:1px;height:33px;background:#dee2e6"></div>
<div style="position:absolute;left:684px;top:525px;width:1px;height:33px;background:#dee2e6"></div>
<div style="position:absolute;left:879px;top:525px;width:1px;height:33px;background:#dee2e6"></div>
<div style="position:absolute;left:1227px;top:525px;width:1px;height:33px;background:#dee2e6"></div>
<div style="position:absolute;left:1426px;top:525px;width:1px;height:33px;background:#dee2e6"></div>
<div style="position:absolute;left:1604px;top:525px;width:1px;height:33px;background:#dee2e6"></div>
<div style="position:absolute;left:1733px;top:525px;width:1px;height:33px;background:#dee2e6"></div>
<svg class="i" style="position:absolute;left:273px;top:533.6px;width:12.78px;height:14.6px;" viewBox="0 0 448 512"><path fill="#0d6efd" d="M416 208H32c-17.670 0-32 14.330-32 32v32c0 17.670 14.330 32 32 32h384c17.670 0 32-14.330 32-32v-32c0-17.670-14.330-32-32-32z"/></svg>
<span style="position:absolute;top:534px;font-size:13.58px;line-height:15px;white-space:nowrap;left:303.5px;">2</span>
<span style="position:absolute;top:534px;font-size:13.58px;line-height:15px;white-space:nowrap;left:692.5px;">1</span>
<span style="position:absolute;top:534px;font-size:13.58px;line-height:15px;white-space:nowrap;left:887px;letter-spacing:0.506px;">2022-05-22</span>
<span style="position:absolute;top:534px;font-size:13.58px;line-height:15px;white-space:nowrap;left:1612.7px;">-</span>
<div style="position:absolute;left:1857px;top:527px;width:24px;height:28px;border:1px solid #98989a;border-left:0;border-radius:0 4px 4px 0;background:#f2f2f2"></div>
<div style="position:absolute;left:1832px;top:527px;width:26px;height:28px;border:1px solid #58585a;border-radius:4px 0 0 4px;background:#f2f2f2"></div>
<svg class="i" style="position:absolute;left:1838.2px;top:535px;width:14.62px;height:13px;" viewBox="0 0 576 512"><path fill="#4b4bdc" d="M402.600 83.200l90.200 90.200c3.800 3.800 3.800 10 0 13.800L274.400 405.600l-92.800 10.300c-12.400 1.400-22.900-9.100-21.500-21.500l10.300-92.800L388.800 83.200c3.800-3.800 10-3.800 13.800 0zm162-22.900l-48.800-48.800c-15.200-15.200-39.900-15.200-55.200 0l-35.400 35.400c-3.800 3.800-3.800 10 0 13.800l90.200 90.200c3.800 3.800 10 3.800 13.800 0l35.400-35.400c15.200-15.300 15.200-40 0-55.200zM384 346.200V448H64V128h229.800c3.200 0 6.200-1.300 8.500-3.500l40-40c7.600-7.600 2.200-20.500-8.500-20.500H48C21.500 64 0 85.500 0 112v352c0 26.500 21.500 48 48 48h352c26.500 0 48-21.500 48-48V306.200c0-10.700-12.900-16-20.500-8.500l-40 40c-2.200 2.300-3.500 5.300-3.500 8.500z"/></svg>
<svg class="i" style="position:absolute;left:1863.2px;top:535px;width:11.38px;height:13px;" viewBox="0 0 448 512"><path fill="#de848a" d="M32 464a48 48 0 0 0 48 48h288a48 48 0 0 0 48-48V128H32zm272-256a16 16 0 0 1 32 0v224a16 16 0 0 1-32 0zm-96 0a16 16 0 0 1 32 0v224a16 16 0 0 1-32 0zm-96 0a16 16 0 0 1 32 0v224a16 16 0 0 1-32 0zM432 32H312l-9.400-18.700A24 24 0 0 0 281.100 0H166.800a23.720 23.720 0 0 0-21.400 13.300L136 32H16A16 16 0 0 0 0 48v32a16 16 0 0 0 16 16h416a16 16 0 0 0 16-16V48a16 16 0 0 0-16-16z"/></svg>
<div style="position:absolute;left:318px;top:563px;width:1518px;height:82px;border:1px solid #dee2e6;background:#fff"></div>
<div style="position:absolute;left:318px;top:607px;width:1518px;height:2px;background:#212529"></div>
<div style="position:absolute;left:319px;top:610px;width:1516px;height:34px;background:#f2f2f2"></div>
<div style="position:absolute;left:681px;top:564px;width:1px;height:43px;background:#dee2e6"></div>
<div style="position:absolute;left:681px;top:610px;width:1px;height:34px;background:#dee2e6"></div>
<div style="position:absolute;left:969px;top:564px;width:1px;height:43px;background:#dee2e6"></div>
<div style="position:absolute;left:969px;top:610px;width:1px;height:34px;background:#dee2e6"></div>
<div style="position:absolute;left:1630px;top:564px;width:1px;height:43px;background:#dee2e6"></div>
<div style="position:absolute;left:1630px;top:610px;width:1px;height:34px;background:#dee2e6"></div>
<span style="position:absolute;top:579px;font-size:13.58px;line-height:15px;white-space:nowrap;left:331.5px;letter-spacing:-0.304px;font-weight:bold;">Part</span>
<span style="position:absolute;top:579px;font-size:13.58px;line-height:15px;white-space:nowrap;left:694px;letter-spacing:-0.407px;font-weight:bold;">Stock Item</span>
<span style="position:absolute;top:579px;font-size:13.58px;line-height:15px;white-space:nowrap;left:982px;letter-spacing:-0.511px;font-weight:bold;">Location</span>
<svg style="position:absolute;left:326px;top:613px;width:28px;height:28px" viewBox="0 0 28 28"><rect x=".5" y=".5" width="27" height="27" fill="#fff" stroke="#cdcdf0"/><g fill="#2179d2"><path d="M9.9 2 Q15 1.6 21.1 3.3 L20.5 7.6 L18.9 8.6 L10.5 6.8 L9.5 3.9Z" fill="#2a82d8"/><path d="M11.4 6.6 L18.9 8.2 L18.9 13.8 L11.4 13.5Z"/><path d="M13 8 h1.5 v4.7 h-1.5z M15.8 8.4 h1.6 v4.6 h-1.6z" fill="#8fbfea"/><path d="M10.5 13.2 L19.6 13.6 L19.9 17.1 L18.3 18.3 L7.6 17.1 L7 15.5Z"/><path d="M7.3 16.1 L9.9 16.7 L8.6 24.6 L6.4 24.3Z"/><path d="M14.5 17.7 L17.4 18 L16.8 25.9 L14.9 25.5Z"/><path d="M18 17.1 L19.9 16.7 L20.3 22.1 L18.3 22.7Z"/><path d="M10.5 17.4 L12.4 17.7 L12 20.8 L10.5 20.5Z"/></g></svg>
<a style="position:absolute;top:619px;font-size:12.61px;line-height:14px;white-space:nowrap;left:367.5px;letter-spacing:-0.097px;color:#0d6efd;">Blue Chair</a>
<a style="position:absolute;top:621px;font-size:12.61px;line-height:14px;white-space:nowrap;left:688.5px;letter-spacing:0.252px;color:#0d6efd;">Quantity: 5</a>
<span style="position:absolute;top:621px;font-size:12.61px;line-height:14px;white-space:nowrap;left:976.5px;letter-spacing:0.068px;font-style:italic;">Shipped to customer - 2022-05-22</span>
<div style="position:absolute;left:1778px;top:618px;width:50px;height:17px;background:#198754;border-radius:4px"></div>
<span style="position:absolute;top:621px;font-size:9.46px;line-height:11px;white-space:nowrap;left:1784.3px;letter-spacing:0.199px;font-weight:bold;color:#fff;">Shipped</span>
<div style="position:absolute;left:266px;top:648px;width:1622px;height:1px;background:#dee2e6"></div>
<div style="position:absolute;left:266px;top:649px;width:1622px;height:35px;background:#f2f2f2"></div>
<div style="position:absolute;left:266px;top:684px;width:1622px;height:1px;background:#dee2e6"></div>
<div style="position:absolute;left:295px;top:649px;width:1px;height:35px;background:#dee2e6"></div>
<div style="position:absolute;left:684px;top:649px;width:1px;height:35px;background:#dee2e6"></div>
<div style="position:absolute;left:879px;top:649px;width:1px;height:35px;background:#dee2e6"></div>
<div style="position:absolute;left:1227px;top:649px;width:1px;height:35px;background:#dee2e6"></div>
<div style="position:absolute;left:1426px;top:649px;width:1px;height:35px;background:#dee2e6"></div>
<div style="position:absolute;left:1604px;top:649px;width:1px;height:35px;background:#dee2e6"></div>
<div style="position:absolute;left:1733px;top:649px;width:1px;height:35px;background:#dee2e6"></div>
<svg class="i" style="position:absolute;left:273px;top:659.6px;width:12.78px;height:14.6px;" viewBox="0 0 448 512"><path fill="#0d6efd" d="M416 208H32c-17.670 0-32 14.330-32 32v32c0 17.670 14.330 32 32 32h384c17.670 0 32-14.330 32-32v-32c0-17.670-14.330-32-32-32z"/></svg>
<span style="position:absolute;top:660px;font-size:13.58px;line-height:15px;white-space:nowrap;left:303.5px;">3</span>
<span style="position:absolute;top:660px;font-size:13.58px;line-height:15px;white-space:nowrap;left:692.5px;">1</span>
<span style="position:absolute;top:660px;font-size:13.58px;line-height:15px;white-space:nowrap;left:887px;letter-spacing:0.506px;">2021-09-08</span>
<span style="position:absolute;top:660px;font-size:13.58px;line-height:15px;white-space:nowrap;left:1234px;letter-spacing:0.724px;">jjj</span>
<span style="position:absolute;top:660px;font-size:13.58px;line-height:15px;white-space:nowrap;left:1612.7px;">-</span>
<div style="position:absolute;left:1857px;top:653px;width:24px;height:28px;border:1px solid #98989a;border-left:0;border-radius:0 4px 4px 0;background:#f2f2f2"></div>
<div style="position:absolute;left:1832px;top:653px;width:26px;height:28px;border:1px solid #58585a;border-radius:4px 0 0 4px;background:#f2f2f2"></div>
<svg class="i" style="position:absolute;left:1838.2px;top:661px;width:14.62px;height:13px;" viewBox="0 0 576 512"><path fill="#4b4bdc" d="M402.600 83.200l90.200 90.200c3.800 3.800 3.800 10 0 13.800L274.400 405.600l-92.800 10.300c-12.400 1.400-22.900-9.100-21.500-21.500l10.300-92.800L388.800 83.200c3.800-3.800 10-3.800 13.800 0zm162-22.900l-48.800-48.800c-15.200-15.200-39.900-15.200-55.200 0l-35.400 35.400c-3.800 3.800-3.800 10 0 13.800l90.200 90.200c3.800 3.800 10 3.800 13.800 0l35.400-35.400c15.200-15.300 15.200-40 0-55.200zM384 346.200V448H64V128h229.800c3.200 0 6.200-1.300 8.500-3.500l40-40c7.600-7.600 2.200-20.500-8.500-20.500H48C21.500 64 0 85.500 0 112v352c0 26.500 21.500 48 48 48h352c26.500 0 48-21.500 48-48V306.200c0-10.700-12.900-16-20.500-8.500l-40 40c-2.200 2.300-3.500 5.300-3.500 8.500z"/></svg>
<svg class="i" style="position:absolute;left:1863.2px;top:661px;width:11.38px;height:13px;" viewBox="0 0 448 512"><path fill="#de848a" d="M32 464a48 48 0 0 0 48 48h288a48 48 0 0 0 48-48V128H32zm272-256a16 16 0 0 1 32 0v224a16 16 0 0 1-32 0zm-96 0a16 16 0 0 1 32 0v224a16 16 0 0 1-32 0zm-96 0a16 16 0 0 1 32 0v224a16 16 0 0 1-32 0zM432 32H312l-9.400-18.700A24 24 0 0 0 281.100 0H166.800a23.720 23.720 0 0 0-21.400 13.300L136 32H16A16 16 0 0 0 0 48v32a16 16 0 0 0 16 16h416a16 16 0 0 0 16-16V48a16 16 0 0 0-16-16z"/></svg>
<div style="position:absolute;left:318px;top:689px;width:1518px;height:82px;border:1px solid #dee2e6;background:#fff"></div>
<div style="position:absolute;left:318px;top:733px;width:1518px;height:2px;background:#212529"></div>
<div style="position:absolute;left:319px;top:736px;width:1516px;height:34px;background:#f2f2f2"></div>
<div style="position:absolute;left:681px;top:690px;width:1px;height:43px;background:#dee2e6"></div>
<div style="position:absolute;left:681px;top:736px;width:1px;height:34px;background:#dee2e6"></div>
<div style="position:absolute;left:969px;top:690px;width:1px;height:43px;background:#dee2e6"></div>
<div style="position:absolute;left:969px;top:736px;width:1px;height:34px;background:#dee2e6"></div>
<div style="position:absolute;left:1630px;top:690px;width:1px;height:43px;background:#dee2e6"></div>
<div style="position:absolute;left:1630px;top:736px;width:1px;height:34px;background:#dee2e6"></div>
<span style="position:absolute;top:705px;font-size:13.58px;line-height:15px;white-space:nowrap;left:331.5px;letter-spacing:-0.304px;font-weight:bold;">Part</span>
<span style="position:absolute;top:705px;font-size:13.58px;line-height:15px;white-space:nowrap;left:694px;letter-spacing:-0.407px;font-weight:bold;">Stock Item</span>
<span style="position:absolute;top:705px;font-size:13.58px;line-height:15px;white-space:nowrap;left:982px;letter-spacing:-0.511px;font-weight:bold;">Location</span>
<svg style="position:absolute;left:326px;top:738px;width:28px;height:28px" viewBox="0 0 28 28"><rect x=".5" y=".5" width="27" height="27" fill="#fff" stroke="#cdcdf0"/><g fill="#2179d2"><path d="M9.9 2 Q15 1.6 21.1 3.3 L20.5 7.6 L18.9 8.6 L10.5 6.8 L9.5 3.9Z" fill="#2a82d8"/><path d="M11.4 6.6 L18.9 8.2 L18.9 13.8 L11.4 13.5Z"/><path d="M13 8 h1.5 v4.7 h-1.5z M15.8 8.4 h1.6 v4.6 h-1.6z" fill="#8fbfea"/><path d="M10.5 13.2 L19.6 13.6 L19.9 17.1 L18.3 18.3 L7.6 17.1 L7 15.5Z"/><path d="M7.3 16.1 L9.9 16.7 L8.6 24.6 L6.4 24.3Z"/><path d="M14.5 17.7 L17.4 18 L16.8 25.9 L14.9 25.5Z"/><path d="M18 17.1 L19.9 16.7 L20.3 22.1 L18.3 22.7Z"/><path d="M10.5 17.4 L12.4 17.7 L12 20.8 L10.5 20.5Z"/></g></svg>
<a style="position:absolute;top:744px;font-size:12.61px;line-height:14px;white-space:nowrap;left:367.5px;letter-spacing:-0.097px;color:#0d6efd;">Blue Chair</a>
<a style="position:absolute;top:746px;font-size:12.61px;line-height:14px;white-space:nowrap;left:688.5px;letter-spacing:0.252px;color:#0d6efd;">Quantity: 5</a>
<span style="position:absolute;top:746px;font-size:12.61px;line-height:14px;white-space:nowrap;left:976.5px;letter-spacing:0.068px;font-style:italic;">Shipped to customer - 2021-09-08</span>
<div style="position:absolute;left:1778px;top:744px;width:50px;height:17px;background:#198754;border-radius:4px"></div>
<span style="position:absolute;top:746px;font-size:9.46px;line-height:11px;white-space:nowrap;left:1784.3px;letter-spacing:0.199px;font-weight:bold;color:#fff;">Shipped</span>
<span style="position:absolute;top:794px;font-size:15.52px;line-height:17px;white-space:nowrap;left:265px;letter-spacing:0.263px;color:#636365;">Showing 1 to 2 of 2 rows</span>
<div style="position:absolute;left:452px;top:785px;width:61px;height:38px;background:#68686a;border-radius:5px"></div>
<span style="position:absolute;top:796px;font-size:15.52px;line-height:17px;white-space:nowrap;left:464.6px;letter-spacing:0.338px;color:#fff;">25</span>
<div style="position:absolute;left:491px;top:801.5px;width:0px;height:0px;border-left:4.6px solid transparent;border-right:4.6px solid transparent;border-bottom:4.8px solid #fff"></div>
<span style="position:absolute;top:794px;font-size:15.52px;line-height:17px;white-space:nowrap;left:517.5px;letter-spacing:0.263px;color:#636365;">rows per page</span>
</section>
</body></html>
